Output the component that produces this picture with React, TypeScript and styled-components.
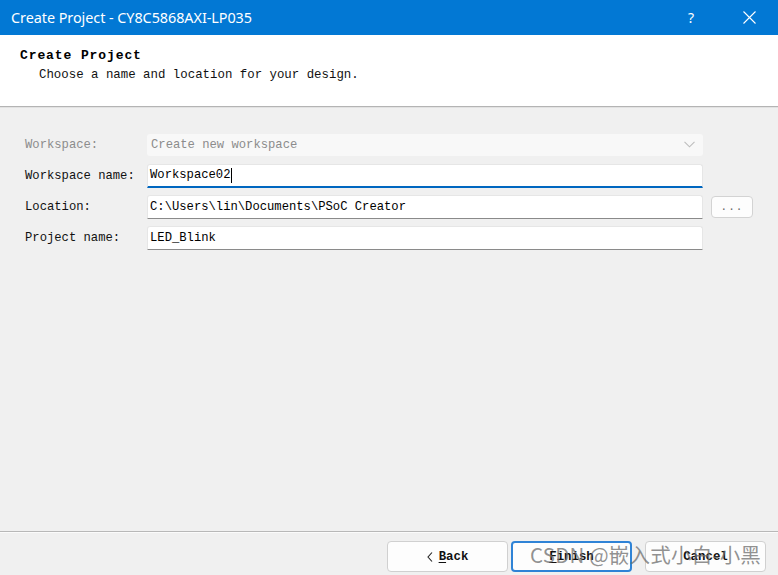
import styled, { createGlobalStyle } from "styled-components";

const GlobalStyle = createGlobalStyle`
  html, body {
    margin: 0;
    padding: 0;
    background: #f0f0f0;
  }
`;

const mono = `"Liberation Mono", "DejaVu Sans Mono", monospace`;

const WindowStyles = styled.div`
  position: relative;
  width: 778px;
  height: 575px;
  display: flex;
  flex-direction: column;
  background: #f0f0f0;
  overflow: hidden;
`;

const TitleBar = styled.header`
  height: 35px;
  flex: none;
  display: flex;
  align-items: center;
  background: #0278d4;
  color: #ffffff;
  padding-left: 11px;

  & > h1 {
    flex: 1;
    margin: 0;
    font-family: "Noto Sans", "Open Sans", sans-serif;
    font-weight: 400;
    font-size: 14.4px;
    letter-spacing: -0.05px;
  }
`;

const TitleControl = styled.div`
  width: 58px;
  height: 35px;
  display: flex;
  align-items: center;
  justify-content: center;
  font-family: "Noto Sans", sans-serif;
  font-size: 14px;
`;

const HeaderStyles = styled.section`
  height: 72px;
  flex: none;
  background: #ffffff;
  border-bottom: 1px solid #b4b4b4;
  box-shadow: 0 1px 0 #e2e2e2;
  padding: 13px 0 0 20px;
  box-sizing: border-box;

  & > h2 {
    margin: 0;
    font-family: ${mono};
    font-weight: 700;
    font-size: 13px;
    letter-spacing: 0.9px;
    color: #000;
  }

  & > p {
    margin: 5px 0 0 19px;
    font-family: ${mono};
    font-size: 12.4px;
    color: #111;
  }
`;

const FormGrid = styled.div`
  flex: 1;
  display: grid;
  grid-template-columns: 122px 556px auto;
  grid-auto-rows: 23px;
  row-gap: 8px;
  align-items: center;
  align-content: start;
  padding: 26px 0 0 25px;
`;

const Label = styled.label<{ $disabled?: boolean }>`
  font-family: ${mono};
  font-size: 12.2px;
  color: ${(p) => (p.$disabled ? "#8c8c8c" : "#111")};
`;

const Combo = styled.div`
  height: 22px;
  display: flex;
  align-items: center;
  justify-content: space-between;
  background: #f8f8f8;
  border-radius: 3px;
  padding: 0 8px 0 4px;
  font-family: ${mono};
  font-size: 12.2px;
  color: #8c8c8c;
`;

const Field = styled.div<{ $focused?: boolean }>`
  height: 24px;
  box-sizing: border-box;
  display: flex;
  align-items: center;
  background: #ffffff;
  border: 1px solid #e6e6e6;
  border-bottom: ${(p) => (p.$focused ? "2px solid #0067c0" : "1px solid #8a8a8a")};
  border-radius: 3px 3px 0 0;
  padding: 0 2px;
  font-family: ${mono};
  font-size: 12.2px;
  color: #000;
`;

const Caret = styled.span`
  display: inline-block;
  width: 1px;
  height: 15px;
  background: #000;
  margin-left: 1px;
`;

const SmallButton = styled.button`
  margin-left: 8px;
  width: 42px;
  height: 22px;
  background: #fdfdfd;
  border: 1px solid #d3d3d3;
  border-radius: 4px;
  font-family: ${mono};
  font-size: 11px;
  color: #666;
  padding: 0;
  letter-spacing: 1px;
`;

const Footer = styled.footer`
  height: 44px;
  flex: none;
  border-top: 1px solid #b8b8b8;
  box-shadow: inset 0 1px 0 #fbfbfb;
  display: flex;
  justify-content: flex-end;
  align-items: flex-start;
  gap: 3px;
  padding: 9px 12px 0 0;
  box-sizing: border-box;
`;

const Button = styled.button<{ $focused?: boolean }>`
  width: 121px;
  height: 31px;
  background: #fdfdfd;
  border: ${(p) => (p.$focused ? "2px solid #2f83d6" : "1px solid #d0d0d0")};
  border-radius: 4px;
  font-family: ${mono};
  font-weight: 700;
  font-size: 12.4px;
  color: #111;
  display: flex;
  align-items: center;
  justify-content: center;
  gap: 6px;
  padding: 0;

  & u {
    text-decoration-thickness: 1px;
    text-underline-offset: 2px;
  }
`;

const CancelButton = styled(Button)`
  margin-left: 10px;
`;

const Watermark = styled.div`
  position: absolute;
  left: 530px;
  top: 539px;
  font-family: "Noto Sans CJK SC", "Noto Sans", sans-serif;
  font-size: 20.5px;
  color: rgba(110, 110, 110, 0.75);
  pointer-events: none;
  white-space: nowrap;
  letter-spacing: 0.2px;
`;

function App() {
  return (
    <WindowStyles>
      <GlobalStyle />
      <TitleBar>
        <h1>Create Project - CY8C5868AXI-LP035</h1>
        <TitleControl>?</TitleControl>
        <TitleControl>
          <svg width="13" height="13" viewBox="0 0 13 13">
            <path d="M0.5 0.5 L12.5 12.5 M12.5 0.5 L0.5 12.5" stroke="#fff" strokeWidth="1.1" />
          </svg>
        </TitleControl>
      </TitleBar>

      <HeaderStyles>
        <h2>Create Project</h2>
        <p>Choose a name and location for your design.</p>
      </HeaderStyles>

      <FormGrid>
        <Label $disabled>Workspace:</Label>
        <Combo>
          <span>Create new workspace</span>
          <svg width="11" height="7" viewBox="0 0 11 7">
            <path d="M0.5 0.8 L5.5 5.8 L10.5 0.8" stroke="#bdbdbd" strokeWidth="1.1" fill="none" />
          </svg>
        </Combo>
        <span />

        <Label>Workspace name:</Label>
        <Field $focused>
          Workspace02<Caret />
        </Field>
        <span />

        <Label>Location:</Label>
        <Field>C:\Users\lin\Documents\PSoC Creator</Field>
        <SmallButton>...</SmallButton>

        <Label>Project name:</Label>
        <Field>LED_Blink</Field>
        <span />
      </FormGrid>

      <Footer>
        <Button>
          <svg width="6" height="10" viewBox="0 0 6 10">
            <path d="M5 0.5 L1 5 L5 9.5" stroke="#222" strokeWidth="1.1" fill="none" />
          </svg>
          <span><u>B</u>ack</span>
        </Button>
        <Button $focused>
          <span><u>F</u>inish</span>
        </Button>
        <CancelButton>Cancel</CancelButton>
      </Footer>

      <Watermark>CSDN @嵌入式小白-小黑</Watermark>
    </WindowStyles>
  );
}

export default App;
